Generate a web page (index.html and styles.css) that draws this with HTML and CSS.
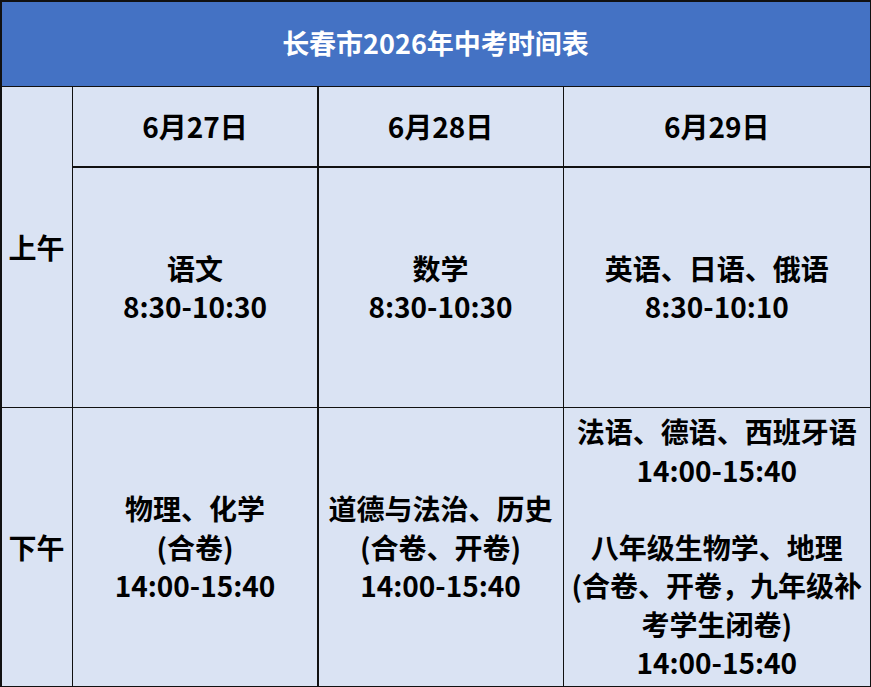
FILE: index.html
```html
<!DOCTYPE html>
<html lang="zh-CN">
<head>
<meta charset="utf-8">
<title>长春市2026年中考时间表</title>
<link rel="stylesheet" href="styles.css">
</head>
<body>
<div class="sheet">
  <div class="cell title">长春市2026年中考时间表</div>
  <div class="cell period am">上午</div>
  <div class="cell date">6月27日</div>
  <div class="cell date">6月28日</div>
  <div class="cell date">6月29日</div>
  <div class="cell exam">语文<br>8:30-10:30</div>
  <div class="cell exam">数学<br>8:30-10:30</div>
  <div class="cell exam">英语、日语、俄语<br>8:30-10:10</div>
  <div class="cell period">下午</div>
  <div class="cell exam">物理、化学<br>(合卷)<br>14:00-15:40</div>
  <div class="cell exam">道德与法治、历史<br>(合卷、开卷)<br>14:00-15:40</div>
  <div class="cell exam">法语、德语、西班牙语<br>14:00-15:40<br><br>八年级生物学、地理<br>(合卷、开卷，九年级补<br>考学生闭卷)<br>14:00-15:40</div>
</div>
</body>
</html>
```
FILE: styles.css
```css
html, body {
  margin: 0;
  padding: 0;
  background: #ffffff;
}
.sheet {
  width: 871px;
  height: 687px;
  box-sizing: border-box;
  padding: 1.5px;
  display: grid;
  gap: 1.5px;
  grid-template-columns: 70px 244px 244px 1fr;
  grid-template-rows: 84px 79px 239px 1fr;
  background: #111111;
  font-family: "Noto Sans CJK SC", "Noto Sans", sans-serif;
  font-weight: 700;
  font-size: 28px;
  color: #000000;
}
.cell {
  background: #dae3f3;
  display: flex;
  align-items: center;
  justify-content: center;
  text-align: center;
  line-height: 38.5px;
}
.title {
  grid-column: 1 / 5;
  background: #4472c4;
  color: #ffffff;
  font-size: 27px;
}
.am {
  grid-row: span 2;
}
```
